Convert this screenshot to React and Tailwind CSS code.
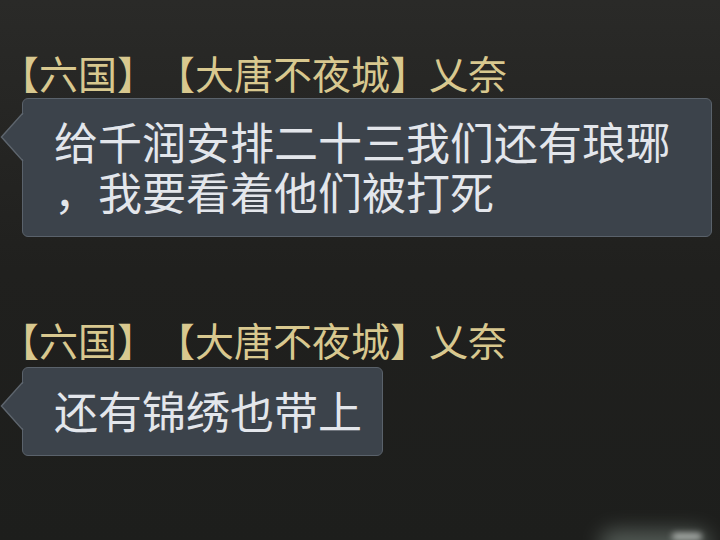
import React from "react"

const cjk = { fontFamily: '"Noto Sans CJK SC", "Noto Sans", sans-serif' }

const Bubble = ({ children, width }) => (
	<div className="relative ml-[22px]" style={width ? { width } : undefined}>
		{/* arrow */}
		<svg
			className="absolute left-[-22px] top-[14px]"
			width="24"
			height="50"
			viewBox="0 0 24 50"
		>
			<path d="M24 1 L2 25 L24 49 Z" fill="#3c434b" />
			<path d="M23 1 L1.5 25 L23 49" fill="none" stroke="#5d656e" strokeWidth="1.5" />
		</svg>
		<div className="rounded-[6px] border-[1.5px] border-[#5a626b] bg-[#3c434b] pl-[31px] pr-[20px] pt-[17px] pb-[20px] text-[44px] leading-[50px] text-[#e3e6eb]">
			{children}
		</div>
	</div>
)

const Name = ({ className }) => (
	<div className={"text-[39px] leading-[44px] text-[#d8c88f] [text-spacing-trim:space-all] " + className}>
		【六国】【大唐不夜城】{"\u4E42"}奈
	</div>
)

export default function App() {
	return (
		<div
			className="relative h-[540px] w-[720px] overflow-hidden bg-gradient-to-b from-[#2a2a28] via-[#20201e] to-[#1d1e1c] [text-spacing-trim:space-all]"
			style={cjk}
		>
			<div className="relative flex flex-col pt-[50px]">
				<Name className="mb-[4px]" />
				<Bubble width="690px">
					给千润安排二十三我们还有琅琊
					<br />
					，我要看着他们被打死
				</Bubble>

				<Name className="mt-[80px] mb-[6px]" />
				<div className="self-start">
					<Bubble>还有锦绣也带上</Bubble>
				</div>
			</div>

			{/* faint glow bottom right */}
			<div className="absolute bottom-[-18px] left-[600px] h-[28px] w-[110px] rounded-full bg-[#cfe6da] opacity-30 blur-[10px]" />
			<div className="absolute bottom-[0px] left-[672px] h-[7px] w-[30px] rounded-full bg-[#f2f6f3] opacity-60 blur-[3px]" />
		</div>
	)
}
